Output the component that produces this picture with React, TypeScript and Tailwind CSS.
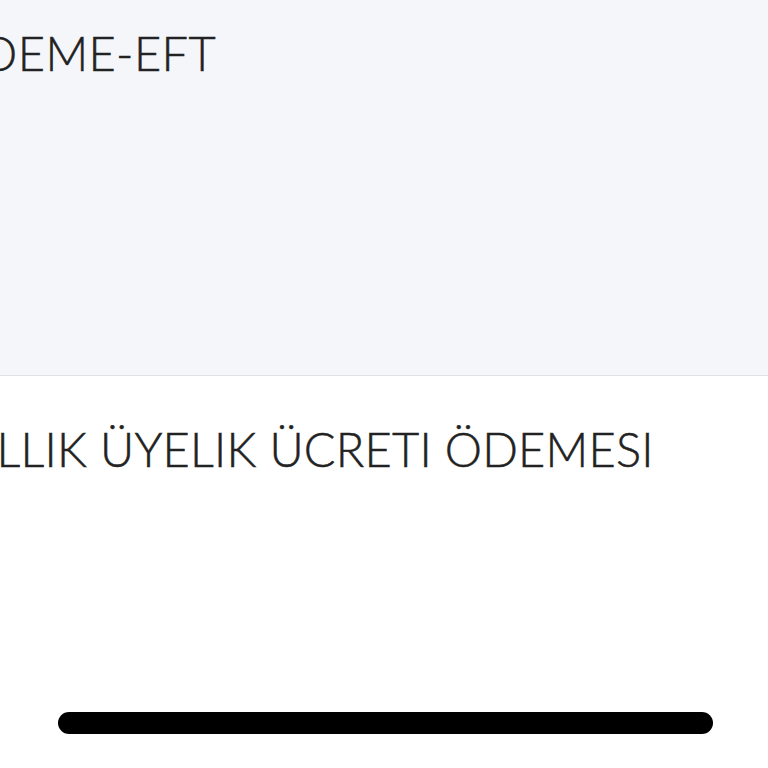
export default function App() {
  return (
    <div className="w-[768px] h-[768px] overflow-hidden bg-white flex flex-col" style={{ fontFamily: 'Lato, "Open Sans", sans-serif' }}>
      <div className="h-[376px] shrink-0 bg-[#f5f6fa] border-b border-[#dfe1e6] overflow-hidden">
        <div className="whitespace-nowrap ml-[-56px] pt-[25px] text-[47px] leading-[56px] font-light tracking-[0.4px] text-[#222222] [-webkit-text-stroke:0.5px_#222222]">ÖDEME-EFT</div>
      </div>
      <div className="flex-1 flex flex-col overflow-hidden">
        <div className="whitespace-nowrap ml-[-44px] pt-[45px] text-[47px] leading-[56px] font-light tracking-[0.2px] text-[#222222] [-webkit-text-stroke:0.5px_#222222]">YILLIK ÜYELIK ÜCRETI ÖDEMESI</div>
        <div className="flex-1" />
        <div className="flex justify-center pb-[34px]">
          <div className="w-[655px] h-[22px] rounded-full bg-black ml-[2px]" />
        </div>
      </div>
    </div>
  );
}
